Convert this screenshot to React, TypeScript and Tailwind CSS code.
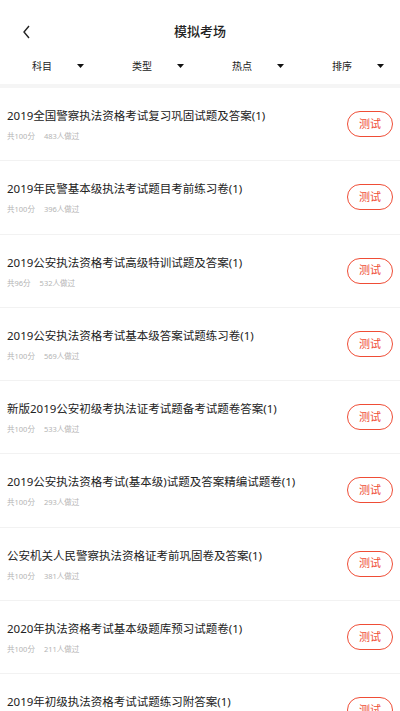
import React from "react";

const exams = [
  { title: "2019全国警察执法资格考试复习巩固试题及答案(1)", score: 100, count: 483 },
  { title: "2019年民警基本级执法考试题目考前练习卷(1)", score: 100, count: 396 },
  { title: "2019公安执法资格考试高级特训试题及答案(1)", score: 96, count: 532 },
  { title: "2019公安执法资格考试基本级答案试题练习卷(1)", score: 100, count: 569 },
  { title: "新版2019公安初级考执法证考试题备考试题卷答案(1)", score: 100, count: 533 },
  { title: "2019公安执法资格考试(基本级)试题及答案精编试题卷(1)", score: 100, count: 293 },
  { title: "公安机关人民警察执法资格证考前巩固卷及答案(1)", score: 100, count: 381 },
  { title: "2020年执法资格考试基本级题库预习试题卷(1)", score: 100, count: 211 },
  { title: "2019年初级执法资格考试试题练习附答案(1)", score: 100, count: 402 },
];

const filters = ["科目", "类型", "热点", "排序"];

function Caret() {
  return (
    <svg width="7" height="4" viewBox="0 0 7 4" className="ml-auto">
      <path d="M0 0H7L3.5 4Z" fill="#111" />
    </svg>
  );
}

export default function App() {
  return (
    <div
      className="w-[400px] h-[711px] overflow-hidden bg-white"
      style={{ fontFamily: '"Noto Sans", "Noto Sans CJK SC", sans-serif' }}
    >
      <header className="relative flex h-12 items-center justify-center pt-4">
        <button type="button" className="absolute left-[22px] top-[25px] p-0">
          <svg width="9" height="14" viewBox="0 0 9 14">
            <path d="M7 1L2 7l5 6" fill="none" stroke="#222" strokeWidth="1.4" />
          </svg>
        </button>
        <h1 className="text-[13px] font-medium text-[#222]">模拟考场</h1>
      </header>

      <div className="flex h-9 items-center">
        {filters.map((f) => (
          <div key={f} className="flex w-[100px] items-center pl-[32px] pr-[16px]">
            <span className="text-[10px] text-[#222]">{f}</span>
            <Caret />
          </div>
        ))}
      </div>

      <div className="h-1 bg-[#f5f5f5]" />

      <ul>
        {exams.map((e, i) => (
          <li
            key={i}
            className="flex h-[73.25px] items-center border-b border-[#f2f2f2] pl-[7px] pr-[7px]"
          >
            <div className="min-w-0 flex-1">
              <p className="text-[11.5px] leading-[18px] text-[#222]">{e.title}</p>
              <p className="mt-[6px] flex gap-[9px] text-[7.5px] leading-[10px] text-[#b4b4b4]">
                <span>共{e.score}分</span>
                <span>{e.count}人做过</span>
              </p>
            </div>
            <button
              type="button"
              className="flex h-[26px] w-[46px] items-center justify-center rounded-full border border-[#ef4d36] text-[11px] text-[#ef4d36]"
            >
              测试
            </button>
          </li>
        ))}
      </ul>
    </div>
  );
}
